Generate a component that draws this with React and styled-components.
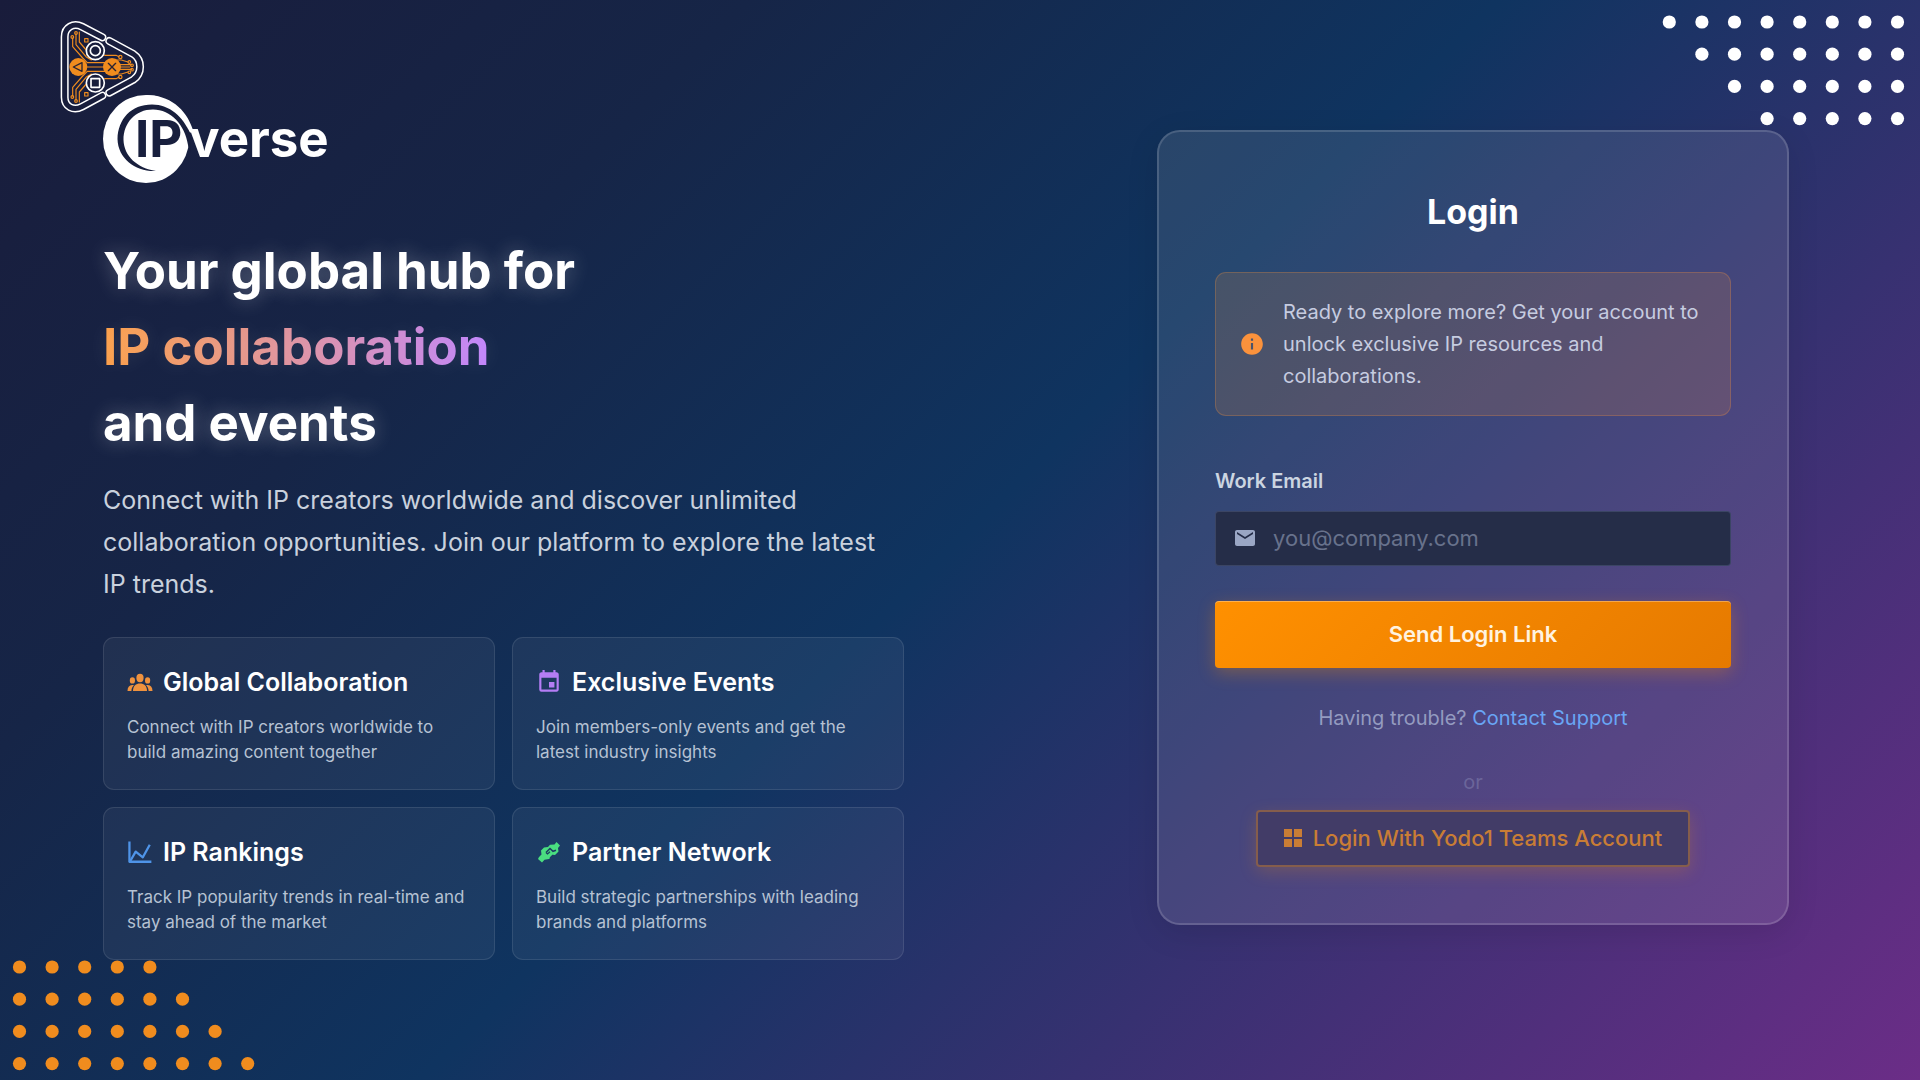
import React, { useState } from 'react';
import styled, { createGlobalStyle } from 'styled-components';
import { MdEmail, MdEvent, MdInfo } from 'react-icons/md';

const features = [
    { icon: 'people', color: '#f0923e', title: 'Global Collaboration', text: 'Connect with IP creators worldwide to build amazing content together' },
    { icon: 'event', color: '#b57df5', title: 'Exclusive Events', text: 'Join members-only events and get the latest industry insights' },
    { icon: 'chart', color: '#4f94e8', title: 'IP Rankings', text: 'Track IP popularity trends in real-time and stay ahead of the market' },
    { icon: 'partner', color: '#4ade80', title: 'Partner Network', text: 'Build strategic partnerships with leading brands and platforms' },
];

function FeatureIcon({ name }) {
    if (name === 'event') return <MdEvent size={26} />
    if (name === 'people') {
        return (
            <svg width="26" height="26" viewBox="0 0 26 26" fill="currentColor">
                <ellipse cx="13" cy="9" rx="3.6" ry="4.2" />
                <ellipse cx="5.4" cy="11.4" rx="2.6" ry="3.2" />
                <ellipse cx="20.6" cy="11.4" rx="2.6" ry="3.2" />
                <path d="M6 22c0-5 3-7.4 7-7.4s7 2.4 7 7.4z" />
                <path d="M.5 22c0-3.6 1.6-5.8 4.7-6 .7 0 1.2.1 1.7.3C5.3 17.700 4.500 19.600 4.400 22z" />
                <path d="M25.500 22c0-3.600-1.600-5.800-4.700-6-.7 0-1.200.1-1.700.3 1.600 1.400 2.400 3.300 2.500 5.700z" />
            </svg>
        )
    }
    if (name === 'chart') {
        return (
            <svg width="26" height="26" viewBox="0 0 32 32" fill="none" stroke="currentColor" strokeWidth="2.8" strokeLinejoin="round">
                <path d="M3 3v25h27" />
                <path d="M3.500 28L10.700 15.500L19.500 22.500L28 7" />
            </svg>
        )
    }
    return (
        <svg width="26" height="26" viewBox="0 0 26 26" fill="currentColor">
            <path d="M3 18l2.500-2.500-.5-4L8 8.500l4-.5 2-2.300 4.500-.3L20.500 3 24 6.500l-2 2.500.5 3.500-3.500 3.500-1.700-.2-4.300 4.200-4.500.8L6 23.500 2 20z" />
            <path d="M10 13.500l4-4 3 2.800 3-1" fill="none" stroke="#1d3b62" strokeWidth="1.5" />
            <path d="M10 13.500l1.500 1.500 2.500-2.200M14 19l3-3" fill="none" stroke="#1d3b62" strokeWidth="1.2" />
        </svg>
    )
}

function TriangleMark() {
    const left = 'M157 82L96 50C70 37 44 52 44 80V262C44 290 70 304 96 290L157 257'
    const right = 'M178 93L250 132C277 150 277 190 250 209L178 248'

    return (
        <MarkSvg viewBox="0 0 330 330" fill="none" strokeLinecap="round" strokeLinejoin="round" aria-hidden="true">
            <g stroke="#f08c1e" strokeWidth="3.5">
                <path d="M68 84v26l30 34 14 14h66M78 72v32l30 36 16 10M88 66v30l26 30" />
                <path d="M68 258v-26l30-34 14-14h66M78 270v-32l30-36 16-10M88 276v-30l26-30" />
                <path d="M106 171h60M164 136h34l9 4M164 206h34l9-4M186 152l14-2h14l20 6M186 190l14 2h14l20-6M205 164h40M205 178h40M205 171h34" />
                <circle cx="67" cy="81" r="4" />
                <circle cx="78" cy="69" r="4" />
                <circle cx="67" cy="261" r="4" />
                <circle cx="78" cy="273" r="4" />
                <circle cx="211" cy="141" r="5" />
                <circle cx="211" cy="201" r="5" />
                <circle cx="238" cy="156" r="4" />
                <circle cx="238" cy="187" r="4" />
                <circle cx="246" cy="166" r="4" />
                <circle cx="246" cy="179" r="4" />
                <path d="M104 86h10v10h-10zM104 248h10v10h-10z" />
            </g>
            <path d={left} stroke="#fff" strokeWidth="24" />
            <path d={left} stroke="#181d3b" strokeWidth="15" />
            <path d={right} stroke="#fff" strokeWidth="24" />
            <path d={right} stroke="#181d3b" strokeWidth="15" />
            <g stroke="#fff" strokeWidth="5" fill="#181d3b">
                <circle cx="136" cy="122" r="27" />
                <circle cx="136" cy="122" r="15" />
                <circle cx="136" cy="219" r="27" />
                <path d="M123 206h26v26h-26z" />
            </g>
            <circle cx="85" cy="171" r="27" fill="#f08c1e" />
            <circle cx="186" cy="171" r="27" fill="#f08c1e" />
            <path d="M70 171l26-13v26zM175 160l22 22M197 160l-22 22" stroke="#2a2433" strokeWidth="4" />
        </MarkSvg>
    )
}

function Logo() {
    return (
        <LogoSvg width="230" height="88" viewBox="0 0 230 88" role="img" aria-label="IPverse">
            <ellipse cx="43" cy="44" rx="43" ry="44" fill="#fff" />
            <path d="M43 0C66 0 83 13 90 35L87 38C80 22 66 9.500 49 9.500z" fill="#fff" />
            <path d="M53 76C33 77 15 64 14.500 44C15 24 28 9.500 49 9.500C67 9.500 80 22 87 38L88 58L85 50C82 30 68 14.500 50 14.500C32 14.500 20.500 28 20.500 45C21 61 34 73 53 76z" fill="#181f3d" />
            <LogoText x="32" y="62" fill="#181f3d">IP</LogoText>
            <LogoText x="86" y="62" fill="#fff">verse</LogoText>
        </LogoSvg>
    )
}

// rows of dots that grow or shrink by one, set against a corner of the page
function DotField({ corner, color, counts }) {
    const top = corner === 'top'
    return (
        <Dots $top={top} viewBox="0 0 261 140" aria-hidden="true">
            {counts.map((count, row) => (
                Array.from({ length: count }).map((_, col) => (
                    <circle
                        key={row + '-' + col}
                        cx={top ? 238.5 - col * 32.6 : 19.5 + col * 32.6}
                        cy={(top ? 22 : 27) + row * 32.2}
                        r="6.6"
                        fill={color}
                    />
                ))
            ))}
        </Dots>
    )
}

function LoginCard() {
    const [email, setEmail] = useState('')

    return (
        <Card onSubmit={(e) => e.preventDefault()}>
            <CardTitle>Login</CardTitle>
            <Notice>
                <MdInfo size={26} color="#fb923c" />
                <p>Ready to explore more? Get your account to unlock exclusive IP resources and collaborations.</p>
            </Notice>
            <Label htmlFor="email">Work Email</Label>
            <Field>
                <MdEmail size={24} />
                <EmailInput id="email" type="email" placeholder="you@company.com" value={email} onChange={(e) => setEmail(e.target.value)} />
            </Field>
            <SubmitButton type="submit">Send Login Link</SubmitButton>
            <Help>Having trouble? <a href="#support">Contact Support</a></Help>
            <Or>or</Or>
            <TeamsButton type="button">
                <svg width="18" height="18" viewBox="0 0 18 18" fill="currentColor">
                    <path d="M0 0h8v8H0zM10 0h8v8h-8zM0 10h8v8H0zM10 10h8v8h-8z" />
                </svg>
                Login With Yodo1 Teams Account
            </TeamsButton>
        </Card>
    )
}

function App() {
    return (
        <>
            <GlobalStyle />
            <Page>
                <TriangleMark />
                <DotField corner="top" color="#fff" counts={[8, 7, 6, 5]} />
                <DotField corner="bottom" color="#f08c1e" counts={[5, 6, 7, 8]} />
                <Intro>
                    <Logo />
                    <Headline>
                        Your global hub for
                        <Gradient>IP collaboration</Gradient>
                        and events
                    </Headline>
                    <Lead>
                        Connect with IP creators worldwide and discover unlimited collaboration
                        opportunities. Join our platform to explore the latest IP trends.
                    </Lead>
                    <FeatureGrid>
                        {features.map((f) => (
                            <Feature key={f.title}>
                                <FeatureTitle $color={f.color}>
                                    <FeatureIcon name={f.icon} />
                                    {f.title}
                                </FeatureTitle>
                                <FeatureText>{f.text}</FeatureText>
                            </Feature>
                        ))}
                    </FeatureGrid>
                </Intro>
                <LoginCard />
            </Page>
        </>
    )
}

export default App

const GlobalStyle = createGlobalStyle`
    * {
        box-sizing: border-box;
    }

    body, h1, h2, h3, p {
        margin: 0;
    }

    body, button, input {
        font-family: Inter, sans-serif;
    }
`

const Page = styled.main`
    position: relative;
    min-height: 100vh;
    display: flex;
    align-items: center;
    justify-content: space-between;
    gap: 48px;
    padding: 0 131px 26px 103px;
    overflow: hidden;
    background: linear-gradient(135deg, #191c3b 0%, #162547 25%, #0f3460 50%, #6b2d87 100%);
`

const MarkSvg = styled.svg`
    position: absolute;
    top: 10px;
    left: 50px;
    width: 110px;
    height: 110px;
`

const Dots = styled.svg`
    position: absolute;
    width: 261px;
    height: 140px;
    ${(p) => p.$top ? 'top: 0; right: 0;' : 'bottom: 0; left: 0;'}
`

const Intro = styled.section`
    position: relative;
    flex: 0 1 801px;
`

const LogoSvg = styled.svg`
    display: block;
`

const LogoText = styled.text`
    font-size: 51px;
    font-weight: 700;
`

const Headline = styled.h1`
    margin-top: 50px;
    font-size: 51px;
    line-height: 76px;
    font-weight: 700;
    color: white;
    text-shadow: 0 0 20px rgba(255, 255, 255, 0.3);
`

const Gradient = styled.span`
    display: block;
    width: fit-content;
    background: linear-gradient(90deg, #fb9f48, #c084fc);
    background-clip: text;
    -webkit-text-fill-color: transparent;
    text-shadow: 0 0 20px rgba(255, 255, 255, 0.1);
`

const Lead = styled.p`
    max-width: 790px;
    margin-top: 18px;
    font-size: 25px;
    line-height: 42px;
    color: #c9d1dd;
`

const FeatureGrid = styled.div`
    display: grid;
    grid-template-columns: 1fr 1fr;
    gap: 17px;
    margin-top: 32px;
`

const Feature = styled.article`
    padding: 24px 23px;
    border: 1px solid rgba(255, 255, 255, 0.1);
    border-radius: 11px;
    background: rgba(255, 255, 255, 0.05);
`

const FeatureTitle = styled.h3`
    display: flex;
    align-items: center;
    gap: 10px;
    font-size: 25px;
    line-height: 40px;
    font-weight: 600;
    color: white;

    svg {
        flex: none;
        color: ${(p) => p.$color};
    }
`

const FeatureText = styled.p`
    margin-top: 13px;
    font-size: 17px;
    line-height: 25px;
    color: #b6c2d3;
`

const Card = styled.form`
    position: relative;
    flex: 0 1 632px;
    padding: 56px;
    border: 2px solid rgba(255, 255, 255, 0.15);
    border-radius: 23px;
    background: rgba(255, 255, 255, 0.1);
    box-shadow: 0 8px 32px rgba(0, 0, 0, 0.1);
`

const CardTitle = styled.h2`
    font-size: 34px;
    line-height: 48px;
    font-weight: 700;
    text-align: center;
    color: white;
`

const Notice = styled.div`
    display: flex;
    align-items: center;
    gap: 18px;
    margin-top: 36px;
    padding: 23px;
    border: 1px solid rgba(251, 146, 60, 0.25);
    border-radius: 11px;
    background: rgba(251, 146, 60, 0.15);
    font-size: 20px;
    line-height: 32px;
    color: #c6cce0;

    svg {
        flex: none;
    }
`

const Label = styled.label`
    display: block;
    margin-top: 49px;
    font-size: 20px;
    line-height: 32px;
    font-weight: 600;
    color: #cbd5e1;
`

const Field = styled.div`
    display: flex;
    align-items: center;
    gap: 16px;
    height: 55px;
    margin-top: 14px;
    padding: 0 17px;
    border: 1px solid rgba(75, 85, 120, 0.6);
    border-radius: 4px;
    background: #252d48;
    color: #9aa6c4;
`

const EmailInput = styled.input`
    flex: 1;
    min-width: 0;
    padding: 0;
    border: 0;
    outline: none;
    background: transparent;
    font-size: 22px;
    color: white;

    &::placeholder {
        color: #68728c;
    }
`

const SubmitButton = styled.button`
    display: block;
    width: 100%;
    height: 67px;
    margin-top: 35px;
    border: 0;
    border-radius: 4px;
    background: linear-gradient(135deg, #ff9000, #e67a00);
    box-shadow: 0 5px 17px rgba(255, 144, 0, 0.3), inset 0 1px 0 rgba(255, 255, 255, 0.3);
    font-size: 22px;
    font-weight: 600;
    color: #fff3e0;
    cursor: pointer;
`

const Help = styled.p`
    margin-top: 34px;
    font-size: 20px;
    line-height: 32px;
    text-align: center;
    color: #949bc0;

    a {
        color: #69a5f5;
        text-decoration: none;
    }
`

const Or = styled.p`
    margin-top: 32px;
    font-size: 20px;
    line-height: 32px;
    text-align: center;
    color: #6b659a;
`

const TeamsButton = styled.button`
    display: flex;
    align-items: center;
    justify-content: center;
    gap: 11px;
    height: 57px;
    margin: 12px auto 0;
    padding: 0 26px;
    border: 2px solid rgba(200, 125, 50, 0.5);
    border-radius: 4px;
    background: #423c67;
    box-shadow: 0 5px 17px rgba(255, 144, 0, 0.2);
    font-size: 22px;
    font-weight: 500;
    color: #c97d35;
    cursor: pointer;
`
